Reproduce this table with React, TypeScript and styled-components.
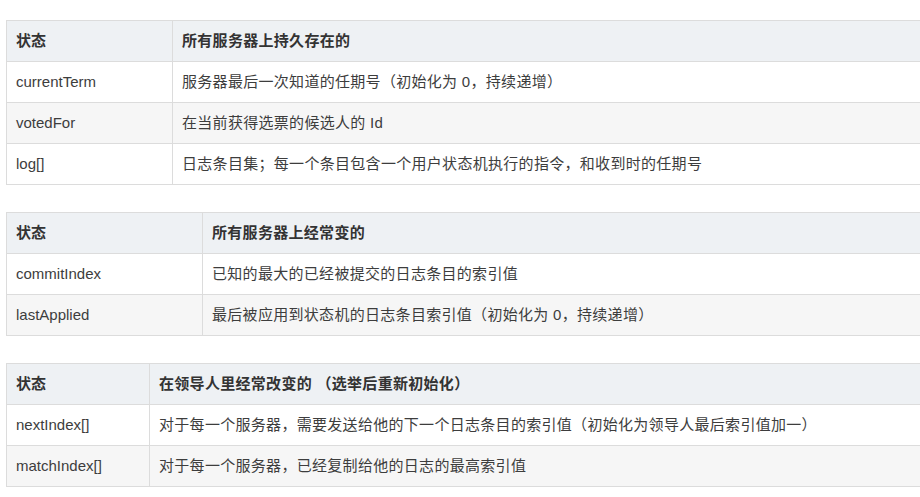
import React from "react";
import styled, { createGlobalStyle } from "styled-components";

const Global = createGlobalStyle`
  html, body { margin: 0; padding: 0; background: #ffffff; overflow: hidden; }
  body {
    font-family: "Liberation Sans", Arial, "Noto Sans CJK SC", sans-serif;
    color: #333333;
  }
`;

const Viewport = styled.div`
  width: 100%;
  overflow: hidden;
`;

const Page = styled.div`
  display: flex;
  flex-direction: column;
  gap: 27px;
  padding: 20px 0 0 6px;
`;

const Table = styled.table`
  border-collapse: collapse;
  width: 960px;
  table-layout: fixed;
  font-size: 15px;
`;

const Row = styled.tr<{ $kind: "head" | "even" | "odd" }>`
  background: ${(p) =>
    p.$kind === "head" ? "#eef1f4" : p.$kind === "even" ? "#ffffff" : "#f6f6f6"};
`;

const Cell = styled.td<{ $head?: boolean; $cjk?: boolean }>`
  border: 1px solid #dcdcdc;
  height: 41px;
  box-sizing: border-box;
  padding: 0 9px;
  text-align: left;
  font-weight: ${(p) => (p.$head ? 700 : 400)};
  color: ${(p) => (p.$head ? "#333333" : "#3d3d3d")};
  letter-spacing: ${(p) => (p.$cjk ? "0.3px" : "0")};
  white-space: nowrap;
  line-height: 20px;
  vertical-align: middle;
`;

type TableData = { col: number; head: [string, string]; rows: [string, string][] };

const tables: TableData[] = [
  {
    col: 166,
    head: ["状态", "所有服务器上持久存在的"],
    rows: [
      ["currentTerm", "服务器最后一次知道的任期号（初始化为 0，持续递增）"],
      ["votedFor", "在当前获得选票的候选人的 Id"],
      ["log[]", "日志条目集；每一个条目包含一个用户状态机执行的指令，和收到时的任期号"],
    ],
  },
  {
    col: 196,
    head: ["状态", "所有服务器上经常变的"],
    rows: [
      ["commitIndex", "已知的最大的已经被提交的日志条目的索引值"],
      ["lastApplied", "最后被应用到状态机的日志条目索引值（初始化为 0，持续递增）"],
    ],
  },
  {
    col: 143,
    head: ["状态", "在领导人里经常改变的 （选举后重新初始化）"],
    rows: [
      ["nextIndex[]", "对于每一个服务器，需要发送给他的下一个日志条目的索引值（初始化为领导人最后索引值加一）"],
      ["matchIndex[]", "对于每一个服务器，已经复制给他的日志的最高索引值"],
    ],
  },
];

export default function App() {
  return (
    <>
      <Global />
      <Viewport>
        <Page>
          {tables.map((t, i) => (
            <Table key={i}>
              <colgroup>
                <col style={{ width: t.col }} />
                <col />
              </colgroup>
              <thead>
                <Row $kind="head">
                  <Cell as="th" $head>{t.head[0]}</Cell>
                  <Cell as="th" $head $cjk>{t.head[1]}</Cell>
                </Row>
              </thead>
              <tbody>
                {t.rows.map((r, j) => (
                  <Row key={j} $kind={j % 2 === 0 ? "even" : "odd"}>
                    <Cell>{r[0]}</Cell>
                    <Cell $cjk>{r[1]}</Cell>
                  </Row>
                ))}
              </tbody>
            </Table>
          ))}
        </Page>
      </Viewport>
    </>
  );
}
